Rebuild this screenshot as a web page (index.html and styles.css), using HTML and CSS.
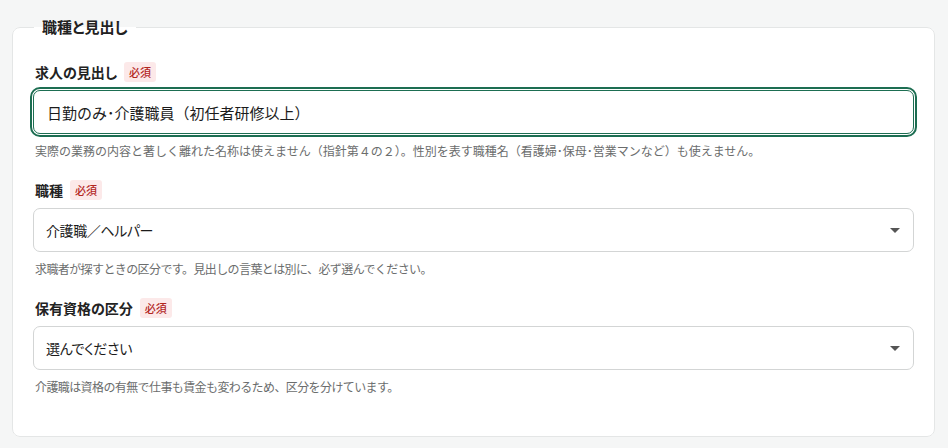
FILE: index.html
```html
<!DOCTYPE html>
<html lang="ja">
<head>
<meta charset="utf-8">
<title>職種と見出し</title>
<link rel="stylesheet" href="styles.css">
</head>
<body>
<form class="page">
  <fieldset class="section">
    <legend class="section-title">職種と見出し</legend>

    <div class="field">
      <div class="field-label">
        <label for="title">求人の見出し</label>
        <span class="badge">必須</span>
      </div>
      <input id="title" class="text-input is-focused" type="text" value="日勤のみ･介護職員（初任者研修以上）">
      <p class="help">実際の業務の内容と著しく離れた名称は使えません（指針第４の２）。性別を表す職種名（看護婦･保母･営業マンなど）も使えません。</p>
    </div>

    <div class="field">
      <div class="field-label">
        <label for="job">職種</label>
        <span class="badge">必須</span>
      </div>
      <div class="select">
        <span class="select-value">介護職／ヘルパー</span>
        <span class="caret"></span>
      </div>
      <p class="help help-tight">求職者が探すときの区分です。見出しの言葉とは別に、必ず選んでください。</p>
    </div>

    <div class="field">
      <div class="field-label">
        <label for="qual">保有資格の区分</label>
        <span class="badge">必須</span>
      </div>
      <div class="select">
        <span class="select-value">選んでください</span>
        <span class="caret"></span>
      </div>
      <p class="help help-tight">介護職は資格の有無で仕事も賃金も変わるため、区分を分けています。</p>
    </div>
  </fieldset>
</form>
</body>
</html>
```

FILE: styles.css
```css
* { box-sizing: border-box; }

html, body {
  margin: 0;
  padding: 0;
  background: #f5f6f6;
}

body {
  font-family: "Noto Sans CJK JP", "Noto Sans", sans-serif;
  color: #222;
}

.page {
  padding: 18px 13px 0 12px;
}

.section {
  margin: 0;
  width: 923px;
  background: #fff;
  border: 1px solid #e4e6e6;
  border-radius: 8px;
  padding: 26px 20px 20px 20px;
}

.section-title {
  padding: 0 8px;
  margin-left: 1px;
  font-size: 15px;
  font-weight: 700;
  color: #222;
  line-height: 18px;
  font-feature-settings: "palt";
}

.field {
  display: flex;
  flex-direction: column;
  margin-bottom: 20px;
}

.field-label {
  display: flex;
  align-items: center;
  gap: 7px;
  padding-left: 2px;
  height: 20px;
  margin-bottom: 8px;
}

.field-label label {
  font-size: 14px;
  font-weight: 700;
  color: #222;
  font-feature-settings: "palt";
}

.badge {
  display: inline-flex;
  align-items: center;
  height: 20px;
  padding: 0 5px;
  border-radius: 3px;
  background: #fce9e9;
  color: #b3261e;
  font-size: 11px;
  font-weight: 500;
}

.text-input {
  width: 100%;
  height: 44px;
  border: 1px solid #d3d5d5;
  border-radius: 7px;
  padding: 0 13px;
  font-family: inherit;
  font-size: 15px;
  color: #1b1b1b;
  background: #fff;
}

.text-input.is-focused {
  border-color: #1d6e52;
  outline: 2px solid #1d6e52;
  outline-offset: 1px;
}

.select {
  display: flex;
  align-items: center;
  justify-content: space-between;
  height: 44px;
  border: 1px solid #d3d5d5;
  border-radius: 7px;
  padding: 0 12px 0 12px;
  background: #fff;
}

.select-value {
  font-size: 14px;
  letter-spacing: -0.4px;
  color: #1b1b1b;
  font-feature-settings: "palt";
}

.caret {
  width: 0;
  height: 0;
  border-left: 5px solid transparent;
  border-right: 5px solid transparent;
  border-top: 5px solid #555;
  margin-right: 1px;
}

.help {
  margin: 8px 0 0 2px;
  font-size: 12px;
  line-height: 18px;
  color: #6b6d6d;
}

.help-tight {
  letter-spacing: -0.6px;
}
```
